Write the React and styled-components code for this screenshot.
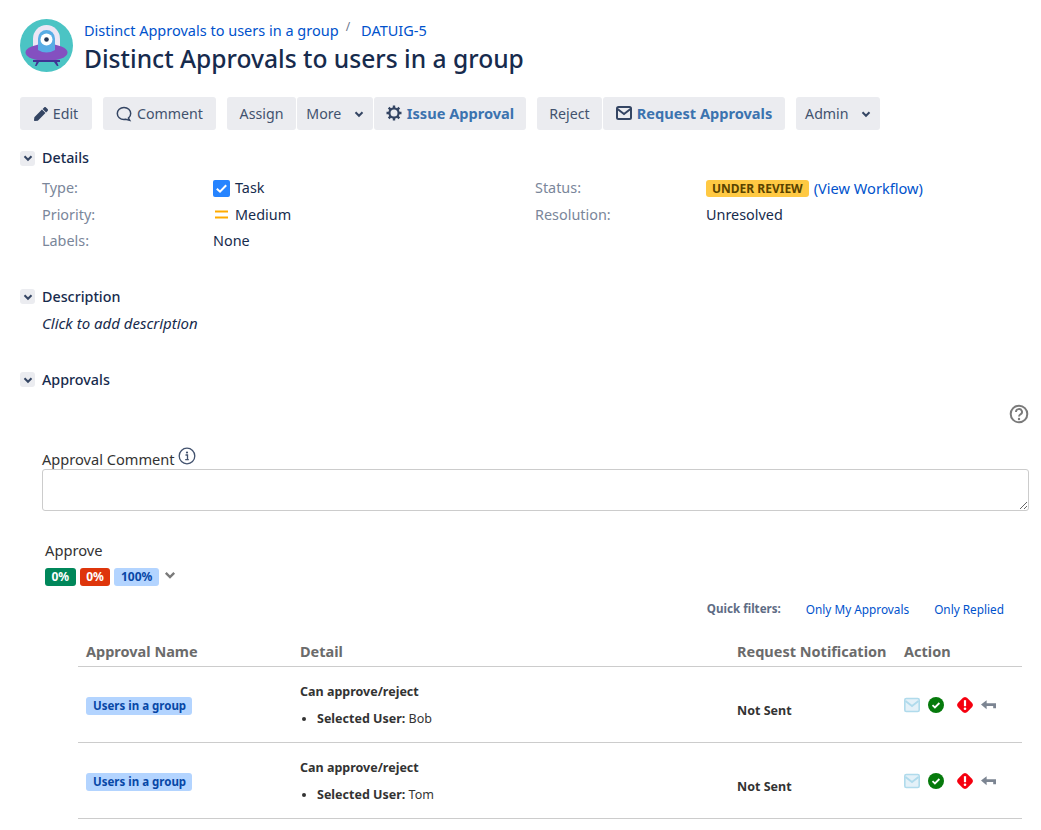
import React from 'react'
import styled, { createGlobalStyle } from 'styled-components'
import { FaPen } from 'react-icons/fa'

const GlobalStyle = createGlobalStyle`
  html, body { margin: 0; padding: 0; background: #fff; }
  body {
    font-family: "Noto Sans", "Open Sans", sans-serif;
    font-size: 14px;
    line-height: 20px;
    color: #172b4d;
  }
`

const Page = styled.div`
  width: 1041px;
  height: 830px;
  overflow: hidden;
  padding: 19px 12px 0 20px;
  box-sizing: border-box;
`
const Header = styled.header`
  display: flex;
  gap: 11px;
  height: 53px;
`
const Crumbs = styled.div`
  display: flex;
  align-items: center;
  height: 22px;
`
const Crumb = styled.a`
  color: #0052cc;
  font-size: 14.5px;
`
const Sep = styled.span`
  color: #6b778c;
  font-size: 12px;
  margin: -6px 11px 0 7px;
`
const Title = styled.h1`
  margin: 3px 0 0;
  font-size: 24.6px;
  line-height: 30px;
  font-weight: 500;
  color: #172b4d;
`
const Toolbar = styled.div`
  display: flex;
  gap: 11px;
  margin-top: 25px;
`
const Group = styled.div`
  display: flex;
  gap: 1px;
`
const Btn = styled.button`
  box-sizing: border-box;
  height: 33px;
  width: ${p => p.$w}px;
  display: flex;
  align-items: center;
  justify-content: center;
  gap: 5px;
  border: 0;
  border-radius: 3px;
  background: #ebecf0;
  color: #42526e;
  font-family: inherit;
  font-size: ${p => (p.$strong ? 14.6 : 14.2)}px;
  font-weight: ${p => (p.$strong ? 700 : 400)};
  padding: 0 0 ${p => (p.$strong ? 1 : 0)}px;
  white-space: nowrap;
  span.blue { color: #3b73af; }
`
const Section = styled.section`
  margin-top: ${p => p.$top}px;
`
const SectionHead = styled.div`
  display: flex;
  align-items: center;
  gap: 7px;
  height: 20px;
  font-size: 14.3px;
  font-weight: 500;
  color: #172b4d;
`
const Toggle = styled.span`
  width: 15px;
  height: 15px;
  border-radius: 3px;
  background: #ebecf0;
  display: flex;
  align-items: center;
  justify-content: center;
`
const Fields = styled.div`
  display: grid;
  grid-template-columns: 171px 322px 171px 1fr;
  grid-auto-rows: 26.5px;
  padding: 7px 0 0 22px;
  align-items: center;
  font-size: 14.4px;
`
const Label = styled.div`
  color: #7a869a;
`
const Value = styled.div`
  display: flex;
  align-items: center;
  gap: 5px;
`
const StatusValue = styled(Value)`
  margin-top: -1px;
`
const Lozenge = styled.span`
  background: #ffc943;
  color: #594300;
  border-radius: 3px;
  font-size: 12px;
  font-weight: 700;
  line-height: 17px;
  padding: 0 6px;
  margin-top: 2px;
`
const Link = styled.a`
  color: #0052cc;
`
const WorkflowLink = styled(Link)`
  font-size: 14.6px;
`
const Hint = styled.div`
  font-size: 15px;
  font-style: italic;
  padding: 6px 0 0 22px;
`
const HelpRow = styled.div`
  display: flex;
  justify-content: flex-end;
  height: 20px;
  margin-top: 14px;
`
const CommentBlock = styled.div`
  margin: 25px 0 0 22px;
`
const CommentLabel = styled.div`
  display: flex;
  align-items: center;
  gap: 3px;
  height: 20px;
  font-size: 14.6px;
  color: #333;
  svg { margin-bottom: 6px; }
`
const TextArea = styled.textarea`
  display: block;
  box-sizing: border-box;
  width: 987px;
  height: 42px;
  border: 1px solid #ccc;
  border-radius: 3px;
  background: #fff;
`
const Approve = styled.div`
  margin: 29px 0 0 25px;
  height: 20px;
  font-size: 14.7px;
  color: #333;
`
const Badges = styled.div`
  display: flex;
  align-items: center;
  gap: 4px;
  margin: 8px 0 0 25px;
  svg { margin: 0 0 3px 1px; }
`
const Badge = styled.span`
  background: ${p => p.$bg};
  color: ${p => p.$fg};
  border-radius: 3px;
  font-size: 12px;
  font-weight: 700;
  line-height: 18px;
  padding: 0 ${p => p.$pad}px;
`
const Filters = styled.div`
  display: flex;
  justify-content: flex-end;
  align-items: center;
  gap: 25px;
  margin: 14px 25px 0 0;
  font-size: 11.8px;
  line-height: 18px;
`
const FilterLabel = styled.b`
  color: #5e6c84;
  font-size: 11.6px;
`
const Table = styled.table`
  width: 944px;
  margin: 23px 0 0 58px;
  border-collapse: collapse;
  table-layout: fixed;
`
const Th = styled.th`
  box-sizing: border-box;
  text-align: left;
  font-weight: 700;
  font-size: 14.5px;
  color: #6b6b6b;
  padding: 0 8px 5px;
  height: 20px;
  border-bottom: 1px solid #ccc;
  width: ${p => p.$w}px;
  white-space: nowrap;
`
const Td = styled.td`
  padding: 3px 8px 0;
  height: 72px;
  border-bottom: 1px solid #ccc;
  font-size: 12.5px;
  color: #333;
  vertical-align: middle;
`
const NameTag = styled.span`
  display: inline-block;
  background: #b3d4ff;
  color: #0747a6;
  border-radius: 3px;
  font-size: 11.5px;
  font-weight: 700;
  line-height: 18px;
  padding: 0 6px 0 7px;
`
const DetailTitle = styled.div`
  font-weight: 700;
  line-height: 18px;
`
const DetailList = styled.ul`
  margin: 9px 0 0;
  padding: 0 0 0 17px;
  line-height: 18px;
`
const NotSent = styled.b`
  color: #333;
  position: relative;
  top: 5px;
`
const Actions = styled.div`
  display: flex;
  align-items: center;
  gap: 8px;
  margin-top: -2px;
  svg { display: block; flex: none; }
  svg:nth-child(3) { margin-left: 5px; }
`

const Avatar = () => (
  <svg width='53' height='53' viewBox='0 0 53 53'>
    <circle cx='26.5' cy='26.5' r='26.5' fill='#4bc4c4' />
    <path d='M13 28V20a13.500 14 0 0 1 27 0v8z' fill='#ece6f5' />
    <ellipse cx='26.500' cy='33.500' rx='21' ry='8.500' fill='#8450c0' />
    <path d='M13 41h27v2h-3l1.500 4h-1.500L34 43H19l-2.500 4H15l1.500-4H13z' fill='#403294' />
    <path d='M18 31V19.500a8.500 8.500 0 0 1 17 0V31q-8.500 5-17 0z' fill='#58ace5' />
    <circle cx='26.500' cy='20.500' r='6' fill='#fff' />
    <circle cx='26.500' cy='20.500' r='2.300' fill='#253858' />
  </svg>
)

const Chevron = ({ width = 10, color = '#344563' }) => (
  <svg width={width} height={width} viewBox='0 0 10 10'>
    <path d='M1.500 3.300L5 6.800l3.500-3.500' fill='none' stroke={color} strokeWidth='2' />
  </svg>
)

const CommentIcon = () => (
  <svg width='16' height='16' viewBox='0 0 16 16'>
    <path d='M8 1.500c3.900 0 6.700 2.700 6.700 6 0 1.900-.9 3.500-2.300 4.600l1.300 2.300-4-1.100c-.6.100-1.100.200-1.700.200-3.900 0-6.700-2.700-6.700-6s2.800-6 6.700-6z' fill='none' stroke='#344563' strokeWidth='1.500' />
  </svg>
)

const GearIcon = () => (
  <svg width='16' height='16' viewBox='0 0 16 16'>
    <circle cx='8' cy='8' r='4.600' fill='none' stroke='#344563' strokeWidth='2.200' />
    <path d='M8 .5v3M8 12.500v3M.5 8h3M12.500 8h3M2.700 2.700l2.100 2.100M11.200 11.200l2.100 2.100M13.300 2.700l-2.100 2.100M4.800 11.200l-2.100 2.100' stroke='#344563' strokeWidth='2.400' />
  </svg>
)

const EnvelopeIcon = () => (
  <svg width='16' height='14' viewBox='0 0 16 14'>
    <rect x='1' y='1' width='14' height='12' rx='1.500' fill='none' stroke='#344563' strokeWidth='2' />
    <path d='M1.500 3l6.500 5 6.500-5' fill='none' stroke='#344563' strokeWidth='2' />
  </svg>
)

const TaskIcon = () => (
  <svg width='17' height='17' viewBox='0 0 17 17'>
    <rect width='17' height='17' rx='2' fill='#2684ff' />
    <path d='M3.800 8.700l3.200 3 6.200-6.500' stroke='#fff' strokeWidth='2' fill='none' />
  </svg>
)

const MediumIcon = () => (
  <svg width='17' height='17' viewBox='0 0 17 17'>
    <path d='M2 5.500h13M2 11.500h13' stroke='#ffab00' strokeWidth='2' />
  </svg>
)

const InfoIcon = () => (
  <svg width='18' height='18' viewBox='0 0 18 18'>
    <circle cx='9' cy='9' r='7.800' fill='none' stroke='#42526e' strokeWidth='1.300' />
    <circle cx='9' cy='5.500' r='1.100' fill='#42526e' />
    <path d='M7.500 8h2v4.500M7.200 12.700h3.600' fill='none' stroke='#42526e' strokeWidth='1.300' />
  </svg>
)

const HelpIcon = () => (
  <svg width='20' height='20' viewBox='0 0 20 20'>
    <circle cx='10' cy='10' r='8.300' fill='none' stroke='#7a7a7a' strokeWidth='2' />
    <path d='M7 8a3 2.800 0 1 1 4.500 2.300c-1 .7-1.500 1.100-1.500 2.200' fill='none' stroke='#7a7a7a' strokeWidth='1.900' />
    <circle cx='10' cy='15' r='1.200' fill='#7a7a7a' />
  </svg>
)

const MailIcon = () => (
  <svg width='16' height='16' viewBox='0 0 16 16'>
    <rect x='.8' y='1.500' width='14.400' height='13' rx='1.500' fill='#e4f1f8' stroke='#b0dbec' strokeWidth='1.600' />
    <path d='M1.500 4l6.500 5 6.500-5' fill='none' stroke='#b0dbec' strokeWidth='1.800' />
  </svg>
)

const OkIcon = () => (
  <svg width='16' height='16' viewBox='0 0 16 16'>
    <circle cx='8' cy='8' r='8' fill='#067a0c' />
    <path d='M4.500 8.200l2.400 2.200 4.500-4.400' fill='none' stroke='#fff' strokeWidth='1.800' />
  </svg>
)

const WarnIcon = () => (
  <svg width='16' height='16' viewBox='0 0 16 16'>
    <path d='M8 0l2 .8L15.200 6l.8 2-.8 2L10 15.200 8 16l-2-.8L.8 10 0 8l.8-2L6 .8z' fill='#f5000f' />
    <path d='M8 3.200v6' stroke='#fff' strokeWidth='2.200' />
    <circle cx='8' cy='11.800' r='1.300' fill='#fff' />
  </svg>
)

const BackIcon = () => (
  <svg width='15' height='12' viewBox='0 0 16 12'>
    <path d='M0 5.500L6 1v3h10v5.500h-3V7H6v3.500z' fill='#7c8592' />
  </svg>
)

const rows = ['Bob', 'Tom']

export default function App () {
  return (
    <Page>
      <GlobalStyle />
      <Header>
        <Avatar />
        <div>
          <Crumbs>
            <Crumb>Distinct Approvals to users in a group</Crumb>
            <Sep>/</Sep>
            <Crumb>DATUIG-5</Crumb>
          </Crumbs>
          <Title>Distinct Approvals to users in a group</Title>
        </div>
      </Header>

      <Toolbar>
        <Btn $w={72}><FaPen size={14} color='#344563' />Edit</Btn>
        <Btn $w={113}><CommentIcon />Comment</Btn>
        <Group>
          <Btn $w={69}>Assign</Btn>
          <Btn $w={76}>More&nbsp;&nbsp;<Chevron /></Btn>
          <Btn $w={152} $strong><GearIcon /><span className='blue'>Issue Approval</span></Btn>
        </Group>
        <Group>
          <Btn $w={65}>Reject</Btn>
          <Btn $w={182} $strong><EnvelopeIcon /><span className='blue'>Request Approvals</span></Btn>
        </Group>
        <Btn $w={84}>Admin&nbsp;&nbsp;<Chevron /></Btn>
      </Toolbar>

      <Section $top={18}>
        <SectionHead><Toggle><Chevron /></Toggle>Details</SectionHead>
        <Fields>
          <Label>Type:</Label>
          <Value><TaskIcon />Task</Value>
          <Label>Status:</Label>
          <StatusValue><Lozenge>UNDER REVIEW</Lozenge><WorkflowLink>(View Workflow)</WorkflowLink></StatusValue>
          <Label>Priority:</Label>
          <Value><MediumIcon />Medium</Value>
          <Label>Resolution:</Label>
          <Value>Unresolved</Value>
          <Label>Labels:</Label>
          <Value>None</Value>
        </Fields>
      </Section>

      <Section $top={32}>
        <SectionHead><Toggle><Chevron /></Toggle>Description</SectionHead>
        <Hint>Click to add description</Hint>
      </Section>

      <Section $top={37}>
        <SectionHead><Toggle><Chevron /></Toggle>Approvals</SectionHead>
        <HelpRow><HelpIcon /></HelpRow>
        <CommentBlock>
          <CommentLabel>Approval Comment <InfoIcon /></CommentLabel>
          <TextArea />
        </CommentBlock>
        <Approve>Approve</Approve>
        <Badges>
          <Badge $bg='#00875a' $fg='#fff' $pad={6.5}>0%</Badge>
          <Badge $bg='#de350b' $fg='#fff' $pad={6.5}>0%</Badge>
          <Badge $bg='#b3d4ff' $fg='#0747a6' $pad={6.5}>100%</Badge>
          <Chevron width={12} color='#7a7a7a' />
        </Badges>
        <Filters>
          <FilterLabel>Quick filters:</FilterLabel>
          <Link>Only My Approvals</Link>
          <Link>Only Replied</Link>
        </Filters>
        <Table>
          <thead>
            <tr>
              <Th $w={214}>Approval Name</Th>
              <Th $w={437}>Detail</Th>
              <Th $w={167}>Request Notification</Th>
              <Th $w={126}>Action</Th>
            </tr>
          </thead>
          <tbody>
            {rows.map(name => (
              <tr key={name}>
                <Td><NameTag>Users in a group</NameTag></Td>
                <Td>
                  <DetailTitle>Can approve/reject</DetailTitle>
                  <DetailList><li><b>Selected User:</b> {name}</li></DetailList>
                </Td>
                <Td><NotSent>Not Sent</NotSent></Td>
                <Td>
                  <Actions><MailIcon /><OkIcon /><WarnIcon /><BackIcon /></Actions>
                </Td>
              </tr>
            ))}
          </tbody>
        </Table>
      </Section>
    </Page>
  )
}
